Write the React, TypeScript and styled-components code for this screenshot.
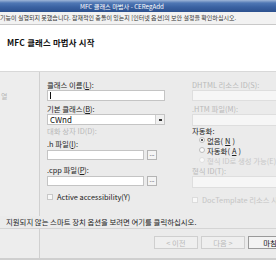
import React from "react";
import styled, { createGlobalStyle } from "styled-components";

const Global = createGlobalStyle`
  html, body { margin: 0; padding: 0; background: #ebebeb; }
  body { font-family: "Noto Sans CJK KR", "Noto Sans", sans-serif; }
`;

const Screen = styled.div`
  width: 276px;
  height: 260px;
  overflow: hidden;
  display: flex;
  flex-direction: column;
  background: #ebebeb;
  font-family: "Noto Sans CJK KR", "Noto Sans", sans-serif;
  font-size: 8px;
  color: #222;
`;

const TitleBar = styled.div`
  height: 12px;
  flex: none;
  background: linear-gradient(#9fb6d8 0px, #4f77b4 3px, #3a62a2 7px, #2d518f 12px);
  color: #fff;
  font-size: 6.2px;
  line-height: 13px;
  padding-left: 80px;
  white-space: nowrap;
`;

const InfoBar = styled.div`
  height: 12px;
  flex: none;
  background: #f2f2f2;
  border-bottom: 1px solid #c9c9c9;
  color: #333;
  font-size: 6px;
  line-height: 12px;
  white-space: nowrap;
  overflow: hidden;
`;

const Header = styled.div`
  height: 47px;
  flex: none;
  background: #fff;
  border-bottom: 1px solid #d8d8d8;
  padding: 11px 0 0 7px;
  box-sizing: border-box;
  font-weight: 700;
  font-size: 8.4px;
  letter-spacing: 0.2px;
  color: #111;
`;

const Body = styled.div`
  flex: 1;
  display: grid;
  grid-template-columns: 40px 1fr;
  grid-template-rows: 148px 8px 1px 1fr;
  background: #ebebeb;
`;

const Nav = styled.div`
  border-right: 1px solid #d0d0d0;
  background: #ededed;
  color: #b8b8b8;
  font-size: 7px;
  padding: 19px 0 0 1px;
`;

const Form = styled.div`
  display: grid;
  grid-template-columns: 118px 1fr;
  column-gap: 27px;
  padding: 7px 0 0 7px;
`;

const Col = styled.div`
  display: flex;
  flex-direction: column;
`;

const Label = styled.div<{ $disabled?: boolean; $mt?: number }>`
  font-size: 7.4px;
  line-height: 9px;
  height: 9px;
  white-space: nowrap;
  margin-top: ${(p) => p.$mt ?? 0}px;
  color: ${(p) => (p.$disabled ? "#b9b9b9" : "#222")};
`;

const Field = styled.div<{ $disabled?: boolean; $w?: number; $h?: number }>`
  box-sizing: border-box;
  width: ${(p) => (p.$w ? `${p.$w}px` : "100%")};
  height: ${(p) => p.$h ?? 11}px;
  margin-top: 1px;
  background: ${(p) => (p.$disabled ? "#f6f6f6" : "#fff")};
  border: 1px solid ${(p) => (p.$disabled ? "#dedede" : "#c4c4c4")};
  font-size: 8px;
  line-height: 9px;
  padding-left: 2px;
  display: flex;
  align-items: center;
  color: #111;
`;

const Caret = styled.span`
  width: 1px;
  height: 7px;
  background: #111;
`;

const SelectBox = styled(Field)`
  justify-content: space-between;
  padding-right: 0;
`;

const DropBtn = styled.span`
  width: 8px;
  height: 9px;
  background: #f0f0f0;
  border-left: 1px solid #d0d0d0;
  display: flex;
  align-items: center;
  justify-content: center;
  &::after {
    content: "";
    width: 3px;
    height: 2px;
    background: #333;
  }
`;

const FileRow = styled.div`
  display: flex;
  align-items: center;
  gap: 3px;
  margin-top: 1px;
`;

const BrowseBtn = styled.div`
  width: 10px;
  height: 10px;
  box-sizing: border-box;
  border: 1px solid #b4b4b4;
  background: #f4f4f4;
  font-size: 6px;
  line-height: 6px;
  text-align: center;
  color: #333;
`;

const CheckRow = styled.div<{ $disabled?: boolean; $mt?: number }>`
  display: flex;
  align-items: center;
  gap: 4px;
  margin-top: ${(p) => p.$mt ?? 0}px;
  font-size: 7.4px;
  white-space: nowrap;
  color: ${(p) => (p.$disabled ? "#c4c4c4" : "#222")};
`;

const CheckBox = styled.span<{ $disabled?: boolean }>`
  width: 6px;
  height: 6px;
  box-sizing: border-box;
  border: 1px solid ${(p) => (p.$disabled ? "#dcdcdc" : "#c8c8c8")};
  background: #f8f8f8;
`;

const RadioRow = styled.div<{ $disabled?: boolean }>`
  display: flex;
  align-items: center;
  gap: 2px;
  height: 10px;
  padding-left: 7px;
  font-size: 7.4px;
  white-space: nowrap;
  color: ${(p) => (p.$disabled ? "#c8c8c8" : "#222")};
`;

const Radio = styled.span<{ $checked?: boolean; $disabled?: boolean }>`
  width: 6px;
  height: 6px;
  box-sizing: border-box;
  border-radius: 50%;
  border: 1px solid ${(p) => (p.$disabled ? "#e0e0e0" : "#bcbcbc")};
  background: #fafafa;
  display: flex;
  align-items: center;
  justify-content: center;
  &::after {
    content: "";
    width: 2px;
    height: 2px;
    border-radius: 50%;
    background: ${(p) => (p.$checked ? "#222" : "transparent")};
  }
`;

const LinkRow = styled.div`
  grid-column: 1 / 3;
  font-size: 7.4px;
  padding-left: 6px;
  white-space: nowrap;
  color: #222;
  background: #ebebeb;
  margin-top: -4px;
  height: 12px;
  line-height: 12px;
`;

const Sep = styled.div`
  grid-column: 1 / 3;
  background: #d4d4d4;
`;

const Buttons = styled.div`
  display: flex;
  gap: 3px;
  padding: 7px 0 0 114px;
  border-bottom: 2px solid #cfcfcf;
`;

const Button = styled.div<{ $primary?: boolean }>`
  flex: none;
  width: 44px;
  height: 13px;
  box-sizing: border-box;
  border: 1px solid ${(p) => (p.$primary ? "#9a9a9a" : "#cfcfcf")};
  background: ${(p) => (p.$primary ? "#f3f3f3" : "#efefef")};
  color: ${(p) => (p.$primary ? "#111" : "#b9b9b9")};
  font-size: 7.4px;
  line-height: 11px;
  text-align: center;
  white-space: nowrap;
`;

const NavBottom = styled(Nav)`
  border-bottom: 2px solid #cfcfcf;
`;

export default function App() {
  return (
    <>
      <Global />
      <Screen>
        <TitleBar>MFC 클래스 마법사 - CERegAdd</TitleBar>
        <InfoBar>기능이 실행되지 못했습니다. 잠재적인 충돌이 있는지 [인터넷 옵션]의 보안 설정을 확인하십시오.</InfoBar>
        <Header>MFC 클래스 마법사 시작</Header>
        <Body>
          <Nav>열</Nav>
          <Form>
            <Col>
              <Label $mt={1}>클래스 이름(<u>L</u>):</Label>
              <Field><Caret /></Field>
              <Label $mt={3}>기본 클래스(<u>B</u>):</Label>
              <SelectBox>CWnd<DropBtn /></SelectBox>
              <Label $disabled $mt={1}>대화 상자 ID(D):</Label>
              <Label $mt={4}>.h 파일(<u>I</u>):</Label>
              <FileRow>
                <Field $w={97} $h={10}></Field>
                <BrowseBtn>...</BrowseBtn>
              </FileRow>
              <Label $mt={5}>.cpp 파일(<u>P</u>):</Label>
              <FileRow>
                <Field $w={97} $h={10}></Field>
                <BrowseBtn>...</BrowseBtn>
              </FileRow>
              <CheckRow $mt={5}><CheckBox />Active accessibility(Y)</CheckRow>
            </Col>
            <Col>
              <Label $disabled $mt={1}>DHTML 리소스 ID(S):</Label>
              <Field $disabled />
              <Label $disabled $mt={3}>.HTM 파일(M):</Label>
              <Field $disabled $h={12} />
              <Label $mt={0}>자동화:</Label>
              <RadioRow><Radio $checked />없음(<u>N</u>)</RadioRow>
              <RadioRow><Radio />자동화(<u>A</u>)</RadioRow>
              <RadioRow $disabled><Radio $disabled />형식 ID로 생성 가능(E)</RadioRow>
              <Label $disabled $mt={1}>형식 ID(T):</Label>
              <Field $disabled $h={12} />
              <CheckRow $disabled $mt={6}><CheckBox $disabled />DocTemplate 리소스 사용</CheckRow>
            </Col>
          </Form>
          <LinkRow>지원되지 않는 스마트 장치 옵션을 보려면 여기를 클릭하십시오.</LinkRow>
          <Sep />
          <NavBottom />
          <Buttons>
            <Button>&lt; 이전</Button>
            <Button>다음 &gt;</Button>
            <Button $primary>마침</Button>
          </Buttons>
        </Body>
      </Screen>
    </>
  );
}
